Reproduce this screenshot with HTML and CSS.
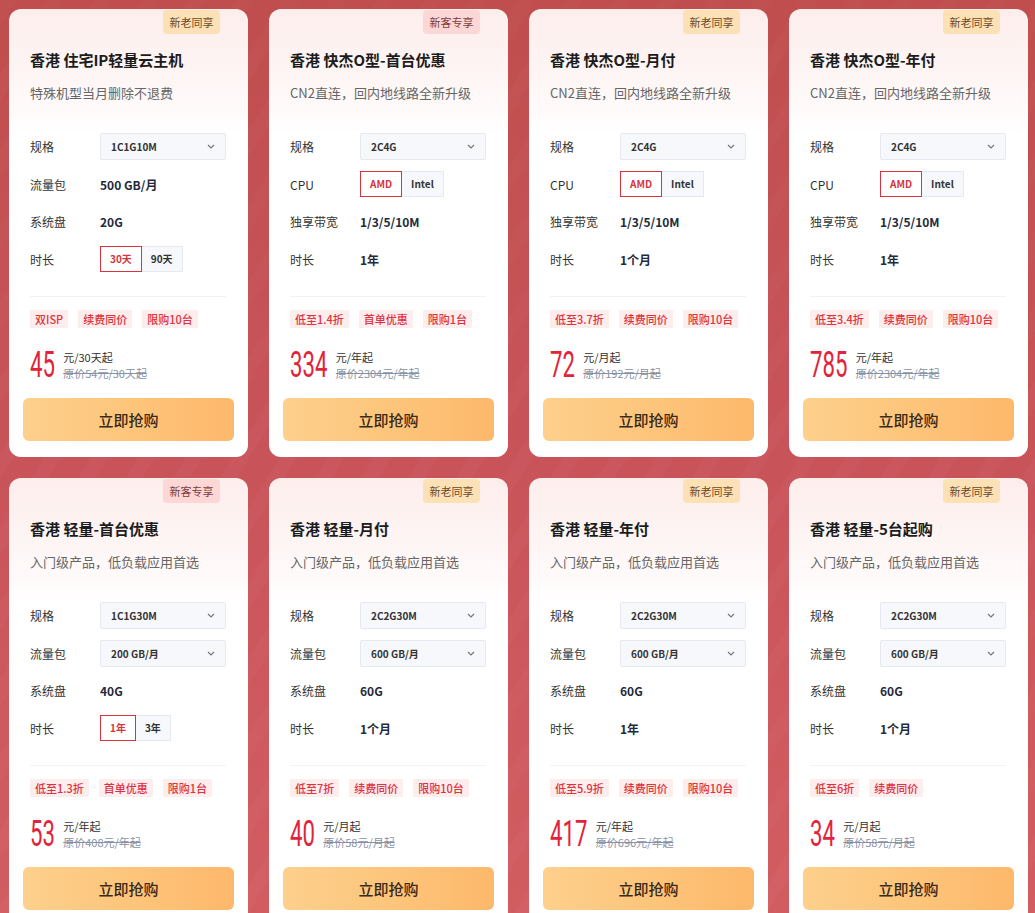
FILE: index.html
```html
<!DOCTYPE html>
<html lang="zh-CN">
<head>
<meta charset="utf-8">
<title>香港云主机活动</title>
<link rel="stylesheet" href="styles.css">
</head>
<body>
<div class="grid">

  <div class="card">
    <div class="badge badge-old">新老同享</div>
    <div class="head">
      <div class="title">香港 住宅IP轻量云主机</div>
      <div class="sub">特殊机型当月删除不退费</div>
    </div>
    <div class="specs">
      <div class="row"><span class="lbl">规格</span><div class="select"><span>1C1G10M</span><svg class="chev" viewBox="0 0 8 5"><polyline points="1,1 4,4 7,1"/></svg></div></div>
      <div class="row"><span class="lbl">流量包</span><span class="val">500 GB/月</span></div>
      <div class="row"><span class="lbl">系统盘</span><span class="val">20G</span></div>
      <div class="row"><span class="lbl">时长</span><div class="opts"><span class="opt on">30天</span><span class="opt">90天</span></div></div>
    </div>
    <div class="divider"></div>
    <div class="tags"><span class="tag">双ISP</span><span class="tag">续费同价</span><span class="tag">限购10台</span></div>
    <div class="price">
      <div class="numbox" style="--n:2"><span class="num">45</span></div>
      <div class="pinfo"><div class="unit">元/30天起</div><div class="orig">原价54元/30天起</div></div>
    </div>
    <button class="buy">立即抢购</button>
  </div>

  <div class="card">
    <div class="badge badge-new">新客专享</div>
    <div class="head">
      <div class="title">香港 快杰O型-首台优惠</div>
      <div class="sub">CN2直连，回内地线路全新升级</div>
    </div>
    <div class="specs">
      <div class="row"><span class="lbl">规格</span><div class="select"><span>2C4G</span><svg class="chev" viewBox="0 0 8 5"><polyline points="1,1 4,4 7,1"/></svg></div></div>
      <div class="row"><span class="lbl">CPU</span><div class="opts"><span class="opt on">AMD</span><span class="opt">Intel</span></div></div>
      <div class="row"><span class="lbl">独享带宽</span><span class="val">1/3/5/10M</span></div>
      <div class="row"><span class="lbl">时长</span><span class="val">1年</span></div>
    </div>
    <div class="divider"></div>
    <div class="tags"><span class="tag">低至1.4折</span><span class="tag">首单优惠</span><span class="tag">限购1台</span></div>
    <div class="price">
      <div class="numbox" style="--n:3"><span class="num">334</span></div>
      <div class="pinfo"><div class="unit">元/年起</div><div class="orig">原价2304元/年起</div></div>
    </div>
    <button class="buy">立即抢购</button>
  </div>

  <div class="card">
    <div class="badge badge-old">新老同享</div>
    <div class="head">
      <div class="title">香港 快杰O型-月付</div>
      <div class="sub">CN2直连，回内地线路全新升级</div>
    </div>
    <div class="specs">
      <div class="row"><span class="lbl">规格</span><div class="select"><span>2C4G</span><svg class="chev" viewBox="0 0 8 5"><polyline points="1,1 4,4 7,1"/></svg></div></div>
      <div class="row"><span class="lbl">CPU</span><div class="opts"><span class="opt on">AMD</span><span class="opt">Intel</span></div></div>
      <div class="row"><span class="lbl">独享带宽</span><span class="val">1/3/5/10M</span></div>
      <div class="row"><span class="lbl">时长</span><span class="val">1个月</span></div>
    </div>
    <div class="divider"></div>
    <div class="tags"><span class="tag">低至3.7折</span><span class="tag">续费同价</span><span class="tag">限购10台</span></div>
    <div class="price">
      <div class="numbox" style="--n:2"><span class="num">72</span></div>
      <div class="pinfo"><div class="unit">元/月起</div><div class="orig">原价192元/月起</div></div>
    </div>
    <button class="buy">立即抢购</button>
  </div>

  <div class="card">
    <div class="badge badge-old">新老同享</div>
    <div class="head">
      <div class="title">香港 快杰O型-年付</div>
      <div class="sub">CN2直连，回内地线路全新升级</div>
    </div>
    <div class="specs">
      <div class="row"><span class="lbl">规格</span><div class="select"><span>2C4G</span><svg class="chev" viewBox="0 0 8 5"><polyline points="1,1 4,4 7,1"/></svg></div></div>
      <div class="row"><span class="lbl">CPU</span><div class="opts"><span class="opt on">AMD</span><span class="opt">Intel</span></div></div>
      <div class="row"><span class="lbl">独享带宽</span><span class="val">1/3/5/10M</span></div>
      <div class="row"><span class="lbl">时长</span><span class="val">1年</span></div>
    </div>
    <div class="divider"></div>
    <div class="tags"><span class="tag">低至3.4折</span><span class="tag">续费同价</span><span class="tag">限购10台</span></div>
    <div class="price">
      <div class="numbox" style="--n:3"><span class="num">785</span></div>
      <div class="pinfo"><div class="unit">元/年起</div><div class="orig">原价2304元/年起</div></div>
    </div>
    <button class="buy">立即抢购</button>
  </div>

  <div class="card">
    <div class="badge badge-new">新客专享</div>
    <div class="head">
      <div class="title">香港 轻量-首台优惠</div>
      <div class="sub">入门级产品，低负载应用首选</div>
    </div>
    <div class="specs">
      <div class="row"><span class="lbl">规格</span><div class="select"><span>1C1G30M</span><svg class="chev" viewBox="0 0 8 5"><polyline points="1,1 4,4 7,1"/></svg></div></div>
      <div class="row"><span class="lbl">流量包</span><div class="select"><span>200 GB/月</span><svg class="chev" viewBox="0 0 8 5"><polyline points="1,1 4,4 7,1"/></svg></div></div>
      <div class="row"><span class="lbl">系统盘</span><span class="val">40G</span></div>
      <div class="row"><span class="lbl">时长</span><div class="opts"><span class="opt on">1年</span><span class="opt">3年</span></div></div>
    </div>
    <div class="divider"></div>
    <div class="tags"><span class="tag">低至1.3折</span><span class="tag">首单优惠</span><span class="tag">限购1台</span></div>
    <div class="price">
      <div class="numbox" style="--n:2"><span class="num">53</span></div>
      <div class="pinfo"><div class="unit">元/年起</div><div class="orig">原价408元/年起</div></div>
    </div>
    <button class="buy">立即抢购</button>
  </div>

  <div class="card">
    <div class="badge badge-old">新老同享</div>
    <div class="head">
      <div class="title">香港 轻量-月付</div>
      <div class="sub">入门级产品，低负载应用首选</div>
    </div>
    <div class="specs">
      <div class="row"><span class="lbl">规格</span><div class="select"><span>2C2G30M</span><svg class="chev" viewBox="0 0 8 5"><polyline points="1,1 4,4 7,1"/></svg></div></div>
      <div class="row"><span class="lbl">流量包</span><div class="select"><span>600 GB/月</span><svg class="chev" viewBox="0 0 8 5"><polyline points="1,1 4,4 7,1"/></svg></div></div>
      <div class="row"><span class="lbl">系统盘</span><span class="val">60G</span></div>
      <div class="row"><span class="lbl">时长</span><span class="val">1个月</span></div>
    </div>
    <div class="divider"></div>
    <div class="tags"><span class="tag">低至7折</span><span class="tag">续费同价</span><span class="tag">限购10台</span></div>
    <div class="price">
      <div class="numbox" style="--n:2"><span class="num">40</span></div>
      <div class="pinfo"><div class="unit">元/月起</div><div class="orig">原价58元/月起</div></div>
    </div>
    <button class="buy">立即抢购</button>
  </div>

  <div class="card">
    <div class="badge badge-old">新老同享</div>
    <div class="head">
      <div class="title">香港 轻量-年付</div>
      <div class="sub">入门级产品，低负载应用首选</div>
    </div>
    <div class="specs">
      <div class="row"><span class="lbl">规格</span><div class="select"><span>2C2G30M</span><svg class="chev" viewBox="0 0 8 5"><polyline points="1,1 4,4 7,1"/></svg></div></div>
      <div class="row"><span class="lbl">流量包</span><div class="select"><span>600 GB/月</span><svg class="chev" viewBox="0 0 8 5"><polyline points="1,1 4,4 7,1"/></svg></div></div>
      <div class="row"><span class="lbl">系统盘</span><span class="val">60G</span></div>
      <div class="row"><span class="lbl">时长</span><span class="val">1年</span></div>
    </div>
    <div class="divider"></div>
    <div class="tags"><span class="tag">低至5.9折</span><span class="tag">续费同价</span><span class="tag">限购10台</span></div>
    <div class="price">
      <div class="numbox" style="--n:3"><span class="num">417</span></div>
      <div class="pinfo"><div class="unit">元/年起</div><div class="orig">原价696元/年起</div></div>
    </div>
    <button class="buy">立即抢购</button>
  </div>

  <div class="card">
    <div class="badge badge-old">新老同享</div>
    <div class="head">
      <div class="title">香港 轻量-5台起购</div>
      <div class="sub">入门级产品，低负载应用首选</div>
    </div>
    <div class="specs">
      <div class="row"><span class="lbl">规格</span><div class="select"><span>2C2G30M</span><svg class="chev" viewBox="0 0 8 5"><polyline points="1,1 4,4 7,1"/></svg></div></div>
      <div class="row"><span class="lbl">流量包</span><div class="select"><span>600 GB/月</span><svg class="chev" viewBox="0 0 8 5"><polyline points="1,1 4,4 7,1"/></svg></div></div>
      <div class="row"><span class="lbl">系统盘</span><span class="val">60G</span></div>
      <div class="row"><span class="lbl">时长</span><span class="val">1个月</span></div>
    </div>
    <div class="divider"></div>
    <div class="tags"><span class="tag">低至6折</span><span class="tag">续费同价</span></div>
    <div class="price">
      <div class="numbox" style="--n:2"><span class="num">34</span></div>
      <div class="pinfo"><div class="unit">元/月起</div><div class="orig">原价58元/月起</div></div>
    </div>
    <button class="buy">立即抢购</button>
  </div>

</div>
</body>
</html>
```

FILE: styles.css
```css
* { box-sizing: border-box; }

html, body {
  margin: 0;
  height: 100%;
}

body {
  padding: 9px 7px 0 9px;
  font-family: "Noto Sans CJK SC", "Liberation Sans", sans-serif;
  color: #333;
  background:
    repeating-linear-gradient(122deg, rgba(255,255,255,0.02) 0 14px, rgba(255,255,255,0) 14px 40px),
    linear-gradient(180deg, #c04e4e 0%, #c8545a 50%, #d25d61 100%);
  overflow: hidden;
}

.grid {
  display: grid;
  grid-template-columns: repeat(4, 239px);
  grid-auto-rows: 448px;
  gap: 21px;
}

.card {
  position: relative;
  border-radius: 12px;
  padding: 0 14px 15px;
  background: linear-gradient(180deg, #fdeeec 0px, #fdf4f3 55px, #fffafa 100px, #ffffff 125px);
  display: flex;
  flex-direction: column;
}

.badge {
  position: absolute;
  top: 1px;
  right: 28px;
  width: 57px;
  height: 24px;
  border-radius: 4px;
  font-size: 11px;
  line-height: 24px;
  text-align: center;
}
.badge-old { background: #fde1b6; color: #6e4a2a; }
.badge-new { background: #fcd7d5; color: #7e3c3c; }

.head {
  padding: 41px 7px 0;
}
.title {
  font-size: 15px;
  line-height: 20px;
  font-weight: 700;
  color: #1c1c1c;
  white-space: nowrap;
}
.sub {
  margin-top: 14px;
  font-size: 13px;
  line-height: 18px;
  color: #666;
  white-space: nowrap;
}

.specs {
  margin-top: 31px;
  padding: 0 8px 0 7px;
  display: flex;
  flex-direction: column;
  gap: 10.5px;
}
.row {
  height: 27px;
  display: flex;
  align-items: center;
}
.lbl {
  width: 70px;
  flex: none;
  font-size: 12px;
  color: #333;
}
.val {
  font-size: 12px;
  font-weight: 700;
  color: #232a3a;
}

.select {
  flex: 1;
  height: 27px;
  border: 1px solid #e6e9f1;
  border-radius: 2px;
  background: #f6f8fc;
  display: flex;
  align-items: center;
  justify-content: space-between;
  padding: 0 10px 0 10px;
  font-size: 10px;
  font-weight: 700;
  color: #333;
}
.chev {
  width: 8px;
  height: 5px;
  fill: none;
  stroke: #777;
  stroke-width: 1.2;
}

.opts {
  display: flex;
}
.opt {
  height: 26px;
  line-height: 24px;
  padding: 0 9px;
  border: 1px solid #e6e9f1;
  background: #f6f8fc;
  font-size: 10px;
  font-weight: 700;
  color: #333;
  margin-left: -1px;
}
.opt:first-child { margin-left: 0; }
.opt.on {
  border-color: #d8343d;
  background: #fff;
  color: #d8343d;
  position: relative;
}

.divider {
  margin: 23px 8px 0 7px;
  height: 1px;
  background: #f1f2f5;
}

.tags {
  margin-top: 13px;
  padding: 0 7px;
  display: flex;
  gap: 10px;
}
.tag {
  height: 18px;
  line-height: 18px;
  padding: 0 5px;
  background: #fdeded;
  color: #e0313e;
  font-size: 11px;
  font-weight: 500;
  border-radius: 1px;
}

.price {
  margin-top: 23px;
  padding: 0 7px;
  display: flex;
  align-items: flex-start;
  height: 28px;
}
.numbox {
  width: calc(var(--n) * 12.6px);
  height: 28px;
  flex: none;
}
.num {
  display: inline-block;
  font-family: "Roboto", "Liberation Sans", sans-serif;
  font-weight: 400;
  font-size: 37px;
  line-height: 28px;
  color: #e2233a;
  transform: scaleX(0.6);
  transform-origin: 0 0;
  white-space: nowrap;
}
.pinfo {
  margin-left: 8px;
  margin-top: -2px;
  font-size: 11px;
  line-height: 16px;
}
.unit { color: #333; }
.orig {
  color: #8892a6;
  text-decoration: line-through;
}

.buy {
  margin-top: 19px;
  height: 43px;
  width: 100%;
  border: 0;
  border-radius: 6px;
  background: linear-gradient(90deg, #fdd08c 0%, #fdc47a 55%, #fdb86b 100%);
  font-family: "Noto Sans CJK SC", "Liberation Sans", sans-serif;
  font-size: 15px;
  font-weight: 500;
  color: #3b2a17;
  cursor: pointer;
}
```
